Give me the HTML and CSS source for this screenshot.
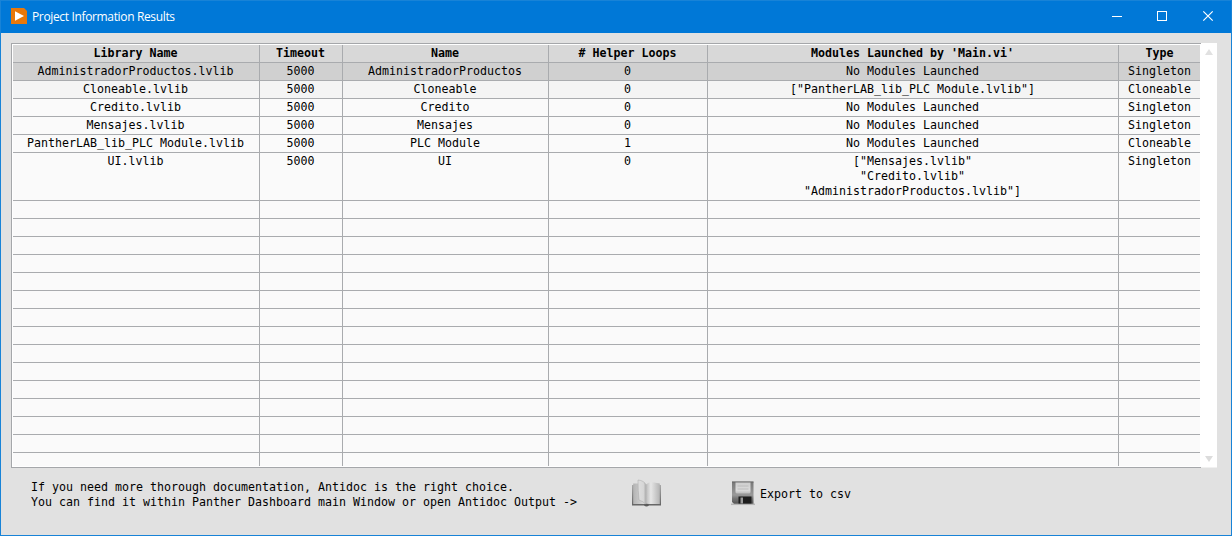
FILE: index.html
```html
<!DOCTYPE html>
<html lang="en">
<head>
<meta charset="utf-8">
<title>Project Information Results</title>
<link rel="stylesheet" href="styles.css">
</head>
<body>
<div class="window">
  <header class="titlebar">
    <svg class="app-icon" width="16" height="16" viewBox="0 0 16 16"><path d="M0 0H13L16 3V16H0Z" fill="#e8780a"/><path d="M4 3.3L13 8L4 12.7Z" fill="#fff"/></svg>
    <span class="title">Project Information Results</span>
    <div class="controls">
      <svg width="46" height="31" viewBox="0 0 46 31"><path d="M18 15.5H28" stroke="#fff"/></svg>
      <svg width="46" height="31" viewBox="0 0 46 31"><rect x="17.500" y="10.500" width="9" height="9" fill="none" stroke="#fff"/></svg>
      <svg width="46" height="31" viewBox="0 0 46 31"><path d="M17.300 10.300L26.700 19.700M26.700 10.300L17.300 19.700" stroke="#fff" stroke-width="1.200"/></svg>
    </div>
  </header>
  <main class="content">
    <div class="table-area">
      <div class="table">
        <div class="row head"><div>Library Name</div><div>Timeout</div><div>Name</div><div># Helper Loops</div><div>Modules Launched by 'Main.vi'</div><div>Type</div></div>
        <div class="row selected"><div>AdministradorProductos.lvlib</div><div>5000</div><div>AdministradorProductos</div><div>0</div><div>No Modules Launched</div><div>Singleton</div></div>
        <div class="row near"><div>Cloneable.lvlib</div><div>5000</div><div>Cloneable</div><div>0</div><div>["PantherLAB_lib_PLC Module.lvlib"]</div><div>Cloneable</div></div>
        <div class="row"><div>Credito.lvlib</div><div>5000</div><div>Credito</div><div>0</div><div>No Modules Launched</div><div>Singleton</div></div>
        <div class="row"><div>Mensajes.lvlib</div><div>5000</div><div>Mensajes</div><div>0</div><div>No Modules Launched</div><div>Singleton</div></div>
        <div class="row"><div>PantherLAB_lib_PLC Module.lvlib</div><div>5000</div><div>PLC Module</div><div>1</div><div>No Modules Launched</div><div>Cloneable</div></div>
        <div class="row tall"><div>UI.lvlib</div><div>5000</div><div>UI</div><div>0</div><div>["Mensajes.lvlib"<br>"Credito.lvlib"<br>"AdministradorProductos.lvlib"]</div><div>Singleton</div></div>
        <div class="row"><div></div><div></div><div></div><div></div><div></div><div></div></div>
        <div class="row"><div></div><div></div><div></div><div></div><div></div><div></div></div>
        <div class="row"><div></div><div></div><div></div><div></div><div></div><div></div></div>
        <div class="row"><div></div><div></div><div></div><div></div><div></div><div></div></div>
        <div class="row"><div></div><div></div><div></div><div></div><div></div><div></div></div>
        <div class="row"><div></div><div></div><div></div><div></div><div></div><div></div></div>
        <div class="row"><div></div><div></div><div></div><div></div><div></div><div></div></div>
        <div class="row"><div></div><div></div><div></div><div></div><div></div><div></div></div>
        <div class="row"><div></div><div></div><div></div><div></div><div></div><div></div></div>
        <div class="row"><div></div><div></div><div></div><div></div><div></div><div></div></div>
        <div class="row"><div></div><div></div><div></div><div></div><div></div><div></div></div>
        <div class="row"><div></div><div></div><div></div><div></div><div></div><div></div></div>
        <div class="row"><div></div><div></div><div></div><div></div><div></div><div></div></div>
        <div class="row"><div></div><div></div><div></div><div></div><div></div><div></div></div>
        <div class="row last"><div></div><div></div><div></div><div></div><div></div><div></div></div>
      </div>
      <div class="scrollbar">
        <svg width="8" height="6" viewBox="0 0 8 6"><path d="M4 0L8 6H0Z" fill="#e1e1e1"/></svg>
        <svg width="8" height="6" viewBox="0 0 8 6"><path d="M4 6L8 0H0Z" fill="#dcdcdc"/></svg>
      </div>
    </div>
    <footer class="footer">
      <p class="hint">If you need more thorough documentation, Antidoc is the right choice.<br>You can find it within Panther Dashboard main Window or open Antidoc Output -&gt;</p>
      <svg class="book" width="32" height="30" viewBox="0 0 32 30">
        <defs>
          <linearGradient id="left"><stop offset="0" stop-color="#b4b4b4"/><stop offset="1" stop-color="#dedede"/></linearGradient>
          <linearGradient id="right"><stop offset="0" stop-color="#bbb"/><stop offset=".35" stop-color="#e6e6e6"/><stop offset="1" stop-color="#b4b4b4"/></linearGradient>
          <linearGradient id="leaf"><stop offset="0" stop-color="#dedede"/><stop offset=".7" stop-color="#d6d6d6"/><stop offset="1" stop-color="#b0b0b0"/></linearGradient>
          <linearGradient id="cover" x2="0" y2="1"><stop offset="0" stop-color="#aaa"/><stop offset="1" stop-color="#606060"/></linearGradient>
        </defs>
        <path d="M1 6H30V26.500H18Q15.500 28.500 13 26.500H1Z" fill="url(#cover)"/>
        <path d="M2.200 4.500H15V25H2.200Z" fill="url(#left)"/>
        <path d="M15 24.800V5.500Q18 2.500 23 3.500Q26 4.200 28.800 4.500V25H18Z" fill="url(#right)"/>
        <path d="M7 1Q13 1.500 14.800 5.500V25.500Q12 22 8 21Q7 12 7 1Z" fill="url(#leaf)" stroke="#a6a6a6" stroke-width=".5"/>
        <path d="M13.500 25.800H17.500" stroke="#555" stroke-width="1.200"/>
      </svg>
      <div class="export">
        <svg width="24" height="25" viewBox="0 0 24 25">
          <defs>
            <linearGradient id="disk" x2="0" y2="1"><stop offset="0" stop-color="#777"/><stop offset=".6" stop-color="#999"/><stop offset=".75" stop-color="#777"/><stop offset="1" stop-color="#555"/></linearGradient>
            <linearGradient id="label" x2="0" y2="1"><stop offset="0" stop-color="#cecece"/><stop offset=".7" stop-color="#dcdcdc"/><stop offset="1" stop-color="#bcbcbc"/></linearGradient>
          </defs>
          <path d="M0 23.300H24" stroke="#999" stroke-width="1.500" opacity=".6"/>
          <path d="M1 0.700H22.500V22.800H3L1 21Z" fill="url(#disk)"/>
          <path d="M1 1H22.500" stroke="#666"/>
          <path d="M4.500 1.500H19.500V11Q19.500 12.500 18 12.500H6Q4.500 12.500 4.500 11Z" fill="url(#label)"/>
          <path d="M6.500 5H17.500M6.500 8H17.500" stroke="#bcbcbc"/>
          <path d="M7.500 15.500H20.500V22.500H7.500Z" fill="#1d1d1d"/>
          <path d="M9.500 16.500H12V22.500H9.500Z" fill="#999"/>
        </svg>
        <span class="export-label">Export to csv</span>
      </div>
    </footer>
  </main>
</div>
</body>
</html>
```
FILE: styles.css
```css
* { box-sizing: border-box; }
body { margin: 0; }
.window {
  width: 1232px;
  height: 536px;
  border: 1px solid #1883d7;
  background: #e1e1e1;
  font: 11.630px/15px "DejaVu Sans Mono", monospace;
  color: #000;
}
svg { display: block; flex: none; }
.titlebar {
  display: flex;
  align-items: center;
  height: 32px;
  padding-left: 10px;
  background: #0078d7;
  color: #fff;
}
.app-icon { margin-bottom: 2px; }
.title {
  margin-left: 5px;
  font: 12px/16px "Open Sans", sans-serif;
  letter-spacing: -0.350px;
  white-space: nowrap;
}
.controls { display: flex; height: 31px; margin: 0 -1px 1px auto; }
.content { padding: 10px 14px 0 10px; }
.table-area { display: flex; height: 425px; }
.table {
  width: 1190px;
  padding: 1px 0 1px 1px;
  border: solid #a5a7aa;
  border-width: 1px 0 1px 1px;
  background: #fff;
}
.row {
  display: grid;
  grid-template-columns: 247px 83px 206px 159px 411px 81px;
  width: 1187px;
  height: 18px;
  background: #fafafa;
  border-bottom: 1px solid #a9abae;
  text-align: center;
  white-space: nowrap;
}
.row > div { padding: 1px 1px 0 0; border-right: 1px solid #a9abae; }
.row > div:last-child { border-right: 0; padding-right: 0; }
.head { background: #d8d8d8; font-weight: bold; }
.selected { background: #d0d0d0; }
.near { background: #f4f4f4; }
.tall { height: 48px; }
.last { height: 13px; border-bottom: 0; }
.scrollbar {
  display: flex;
  flex-direction: column;
  align-items: center;
  justify-content: space-between;
  width: 16px;
  padding: 6px 0 5px;
  background: #fff;
  border-bottom: 1px solid #f0f0f0;
}
.footer { display: flex; align-items: flex-start; padding: 11px 0 0 20px; }
.hint { margin: 1px 0 0; width: 600px; white-space: nowrap; }
.export { display: flex; align-items: center; gap: 5px; margin: 2px 0 0 68px; }
.export-label { padding-top: 2px; }
```
